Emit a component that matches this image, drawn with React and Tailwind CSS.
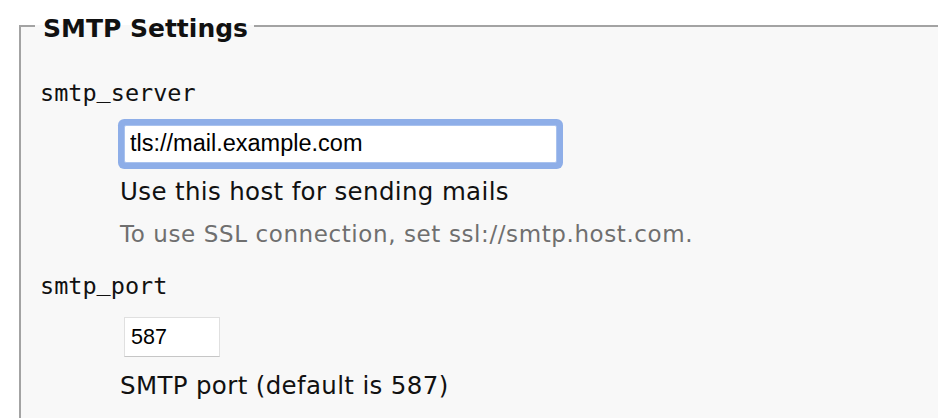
export default function App() {
  return (
    <div className="w-[938px] h-[418px] overflow-hidden bg-white">
      <fieldset className="ml-[19px] mt-[8.5px] w-[1000px] h-[520px] border-2 border-[#a3a3a3] bg-[#f8f8f8] pl-[14px] text-[#111]">
        <legend className="pt-[5px] pl-[8px] pr-[6px] font-bold text-[25px] leading-[30px] font-['DejaVu_Sans',sans-serif]">
          SMTP Settings
        </legend>
        <div className="pl-[5px]">
          <div className="mt-[35px] h-[28px] text-[23.5px] leading-[28px] font-['DejaVu_Sans_Mono',monospace]">
            smtp<span className="align-[4px] leading-[0px]">_</span>server
          </div>
          <div className="pl-[80px]">
            <input
              type="text"
              readOnly
              value="tls://mail.example.com"
              className="block ml-[4px] mt-[18px] w-[433px] h-[38px] border border-[#a9c2ee] rounded-[2px] bg-white pl-[5px] text-[23.5px] text-black font-['Liberation_Sans',Arial,sans-serif] shadow-[0_0_0_6px_#8eaee8] outline-none"
            />
            <div className="mt-[14px] h-[30px] text-[24.5px] leading-[30px] tracking-[0.35px] font-['DejaVu_Sans',sans-serif]">
              Use this host for sending mails
            </div>
            <div className="mt-[13.7px] h-[28px] text-[23px] leading-[28px] tracking-[0.6px] text-[#6f6f6f] font-['DejaVu_Sans',sans-serif]">
              To use SSL connection, set ssl://smtp.host.com.
            </div>
          </div>
          <div className="mt-[24px] h-[28px] text-[23.5px] leading-[28px] font-['DejaVu_Sans_Mono',monospace]">
            smtp<span className="align-[4px] leading-[0px]">_</span>port
          </div>
          <div className="pl-[80px]">
            <input
              type="text"
              readOnly
              value="587"
              className="block ml-[4px] mt-[17px] w-[96px] h-[40px] border border-[#e0e0e0] border-b-[#c6c6c6] bg-white pl-[6px] text-[21.5px] text-black font-['Liberation_Sans',Arial,sans-serif] outline-none"
            />
            <div className="mt-[13.5px] h-[30px] text-[24.5px] leading-[30px] tracking-[0.35px] font-['DejaVu_Sans',sans-serif]">
              SMTP port (default is 587)
            </div>
          </div>
        </div>
      </fieldset>
    </div>
  );
}
